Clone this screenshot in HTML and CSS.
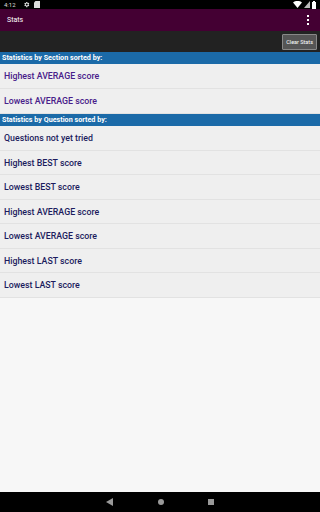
FILE: index.html
```html
<!DOCTYPE html>
<html lang="en">

<head>
    <meta charset="UTF-8">
    <meta name="viewport" content="width=device-width, initial-scale=1.0">
    <link rel="stylesheet" href="styles.css">
</head>

<body>
    <div class="status-bar">
        <div class="status-left">
            <span class="time">4:12</span>
            <svg width="7" height="7" viewBox="0 0 24 24"><path fill="#ddd" d="M19.4 13a7.5 7.5 0 0 0 0-2l2.1-1.6-2-3.5-2.5 1a7 7 0 0 0-1.7-1L15 3h-4l-.4 2.9a7 7 0 0 0-1.7 1l-2.5-1-2 3.5L6.6 11a7.5 7.5 0 0 0 0 2l-2.1 1.6 2 3.5 2.5-1a7 7 0 0 0 1.7 1L11 21h4l.4-2.9a7 7 0 0 0 1.7-1l2.5 1 2-3.5zM13 15.5a3.5 3.5 0 1 1 0-7 3.5 3.5 0 0 1 0 7z"/></svg>
            <svg width="6" height="7" viewBox="0 0 12 14"><path fill="#ddd" d="M3 0h9v14H0V3z"/></svg>
        </div>
        <div class="status-right">
            <svg width="9" height="7" viewBox="0 0 18 14"><path fill="#fff" d="M9 14L0 3a14 14 0 0 1 18 0z"/></svg>
            <svg width="6" height="7" viewBox="0 0 12 14"><path fill="#bbb" d="M12 0v14H0z"/></svg>
            <svg width="4" height="8" viewBox="0 0 8 16"><path fill="#fff" d="M2 0h4v2h2v14H0V2h2z"/></svg>
        </div>
    </div>

    <div class="app-bar">
        <span class="title">Stats</span>
        <div class="overflow">
            <span></span><span></span><span></span>
        </div>
    </div>

    <div class="toolbar">
        <button class="clear-btn">Clear Stats</button>
    </div>

    <div class="content">
        <div class="section-head">Statistics by Section sorted by:</div>
        <div class="row section">Highest AVERAGE score</div>
        <div class="row section">Lowest AVERAGE score</div>

        <div class="section-head">Statistics by Question sorted by:</div>
        <div class="row">Questions not yet tried</div>
        <div class="row">Highest BEST score</div>
        <div class="row">Lowest BEST score</div>
        <div class="row">Highest AVERAGE score</div>
        <div class="row">Lowest AVERAGE score</div>
        <div class="row">Highest LAST score</div>
        <div class="row">Lowest LAST score</div>
    </div>

    <div class="nav-bar">
        <svg width="8" height="8" viewBox="0 0 8 8"><path fill="#999" d="M7 0v8L0 4z"/></svg>
        <span class="home"></span>
        <span class="recent"></span>
    </div>
</body>

</html>
```

FILE: styles.css
```css
body {
    margin: 0;
    padding: 0;
    width: 320px;
    height: 512px;
    display: flex;
    flex-direction: column;
    font-family: Roboto, "Liberation Sans", sans-serif;
    background-color: #f7f7f7;
    overflow: hidden;
}

.status-bar {
    height: 9px;
    background-color: #000;
    display: flex;
    justify-content: space-between;
    align-items: center;
    padding: 0 4px;
}

.status-left,
.status-right {
    display: flex;
    align-items: center;
    gap: 4px;
}

.status-right {
    gap: 2px;
}

.time {
    color: #ddd;
    font-size: 6px;
    margin-right: 3px;
}

.app-bar {
    height: 22px;
    background-color: #440033;
    display: flex;
    justify-content: space-between;
    align-items: center;
    padding: 0 11px 0 7px;
}

.title {
    color: #fff;
    font-size: 7px;
}

.overflow {
    display: flex;
    flex-direction: column;
    gap: 1.5px;
}

.overflow span {
    width: 2.5px;
    height: 2.5px;
    background-color: #fff;
}

.toolbar {
    height: 21px;
    background-color: #222;
    display: flex;
    justify-content: flex-end;
    align-items: center;
    padding-right: 3px;
}

.clear-btn {
    height: 16px;
    padding: 0 3px;
    background-color: #555;
    border: 1px solid #888;
    border-radius: 1px;
    color: #fff;
    font-family: Roboto, "Liberation Sans", sans-serif;
    font-size: 5.5px;
    margin-top: 1px;
}

.content {
    flex: 1;
}

.section-head {
    height: 12px;
    line-height: 12px;
    background-color: #1b6aa8;
    color: #fff;
    font-size: 7.2px;
    font-weight: bold;
    padding-left: 2px;
}

.row {
    height: 23.5px;
    line-height: 25px;
    background-color: #efefef;
    border-bottom: 1px solid #e2e2e2;
    color: #1c1c5e;
    font-size: 8.8px;
    font-weight: 500;
    padding-left: 4px;
}

.row.section {
    height: 24px;
    color: #48208a;
}

.nav-bar {
    height: 20px;
    background-color: #000;
    display: flex;
    justify-content: center;
    align-items: center;
    gap: 44px;
}

.home {
    width: 6px;
    height: 6px;
    border-radius: 50%;
    background-color: #999;
}

.recent {
    width: 6px;
    height: 6px;
    background-color: #999;
}
```
